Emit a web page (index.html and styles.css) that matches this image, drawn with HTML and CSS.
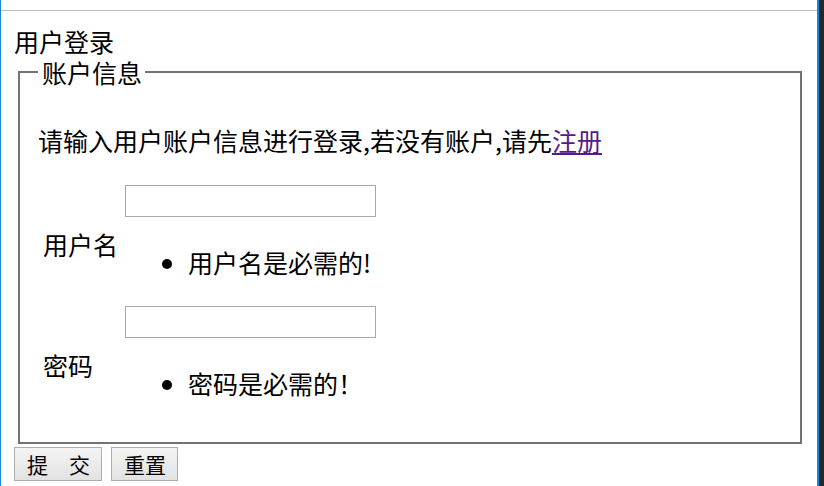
FILE: index.html
```html
<!DOCTYPE html>
<html lang="zh-CN">
<head>
    <meta charset="UTF-8">
    <title>用户登录</title>
    <link rel="stylesheet" href="styles.css">
</head>
<body>
    <div class="frame">
        <div class="edge-left"></div>
        <div class="page">
            <div class="top-strip"></div>
            <form class="login">
                <div class="title">用户登录</div>
                <fieldset class="account">
                    <legend>账户信息</legend>
                    <p class="intro">请输入用户账户信息进行登录,若没有账户,请先<a href="#">注册</a></p>
                    <div class="field">
                        <label class="field-label">用户名</label>
                        <div class="field-control">
                            <input type="text" class="text-input">
                            <ul class="errors">
                                <li>用户名是必需的!</li>
                            </ul>
                        </div>
                    </div>
                    <div class="field">
                        <label class="field-label">密码</label>
                        <div class="field-control">
                            <input type="password" class="text-input">
                            <ul class="errors">
                                <li>密码是必需的！</li>
                            </ul>
                        </div>
                    </div>
                </fieldset>
                <div class="actions">
                    <button type="button" class="btn">提　交</button>
                    <button type="reset" class="btn">重置</button>
                </div>
            </form>
        </div>
        <div class="edge-right"></div>
    </div>
</body>
</html>
```

FILE: styles.css
```css
* {
    box-sizing: border-box;
}

html, body {
    margin: 0;
    padding: 0;
    height: 100%;
    overflow: hidden;
}

body {
    font-family: "Noto Sans CJK SC", "Noto Sans", sans-serif;
    color: #000;
    background: #fff;
}

.frame {
    display: flex;
    height: 100vh;
}

.edge-left {
    width: 1px;
    background: #1a86d9;
}

.page {
    flex: 1;
    background: #fff;
}

.edge-right {
    width: 7px;
    border-left: 2px solid #1a86d9;
    background: #1f2a30;
}

.top-strip {
    height: 11px;
    border-bottom: 1px solid #b9b9b9;
}

.login {
    padding: 16px 15px 0 13px;
    font-size: 25px;
    line-height: 30px;
}

.title {
    line-height: 28px;
    margin-bottom: 2px;
}

.account {
    margin: 0 0 0 4px;
    padding: 0 18px 18px;
    border: 2px solid #737373;
}

.account legend {
    padding: 0 3px 0 4px;
}

.intro {
    margin: 38px 0 30px;
}

.intro a {
    color: #551a8b;
    text-decoration: underline;
}

.field {
    display: flex;
    align-items: center;
}

.field + .field {
    margin-top: 3px;
}

.field-label {
    width: 87px;
    padding-left: 5px;
}

.field-control {
    display: flex;
    flex-direction: column;
    align-items: flex-start;
}

.text-input {
    width: 251px;
    height: 32px;
    margin: 0;
    border: 1px solid #a9a9a9;
    background: #fff;
    font-size: 16px;
}

.errors {
    margin: 30px 0 26px;
    padding-left: 63px;
}

.actions {
    display: flex;
    gap: 9px;
    margin-top: 3px;
}

.btn {
    height: 34px;
    padding: 0 11px 0 12px;
    border: 1px solid #adadad;
    background: linear-gradient(#f4f4f4, #e2e2e2);
    font-family: "Noto Sans CJK SC", sans-serif;
    font-size: 21px;
    line-height: 30px;
    color: #000;
}
```
